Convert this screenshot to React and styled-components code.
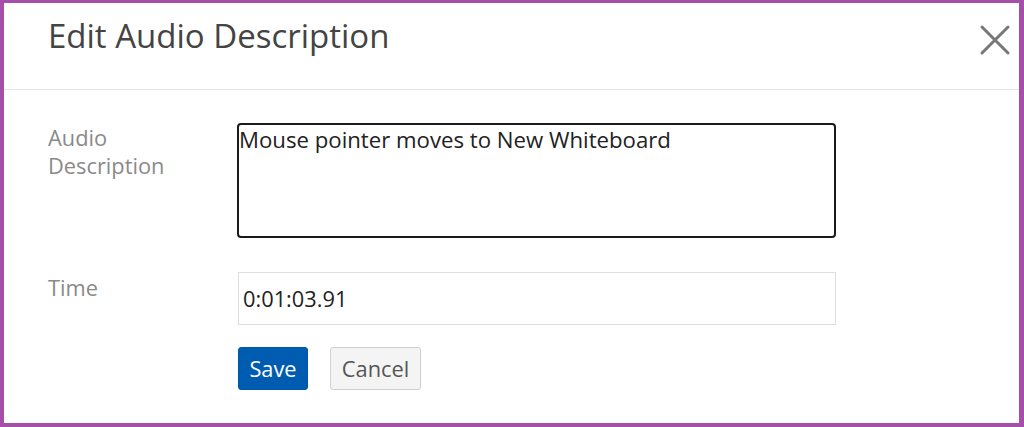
import React from "react";
import styled, { createGlobalStyle } from "styled-components";

const Global = createGlobalStyle`
  html, body { margin: 0; padding: 0; background: #fff; }
  * { box-sizing: border-box; }
`;

const Frame = styled.div`
  width: 1024px;
  height: 427px;
  border-style: solid;
  border-color: #a54fab;
  border-width: 3px 5px 4px 4px;
  background: #fff;
  font-family: "Open Sans", "Noto Sans", sans-serif;
  display: flex;
  flex-direction: column;
`;

const Header = styled.div`
  height: 87px;
  display: flex;
  align-items: flex-start;
  justify-content: space-between;
  padding: 10px 8px 0 44px;
  border-bottom: 1px solid #e3e3e3;
`;

const Title = styled.h1`
  margin: 0;
  font-size: 33px;
  line-height: 45px;
  font-weight: 400;
  color: #444;
`;

const CloseButton = styled.button`
  border: none;
  background: none;
  padding: 0;
  margin-top: 11px;
  width: 32px;
  height: 32px;
  display: flex;
  cursor: pointer;
`;

const Body = styled.div`
  padding: 33px 0 0 44px;
  display: grid;
  grid-template-columns: 189px 599px;
`;

const Label = styled.div`
  font-size: 21.8px;
  line-height: 28px;
  color: #8a8a8a;
  padding-top: ${(p) => p.$top || 0}px;
`;

const TextArea = styled.div`
  height: 115px;
  border: 2px solid #1a1a1a;
  border-radius: 4px;
  padding: 1px 0 0 0;
  font-size: 22.2px;
  line-height: 28px;
  color: #222;
`;

const Input = styled.div`
  margin: 34px 0 0 1px;
  height: 53px;
  border: 1px solid #dedede;
  display: flex;
  align-items: center;
  padding: 0 4px;
  font-size: 21.8px;
  color: #222;
`;

const Buttons = styled.div`
  grid-column: 2;
  display: flex;
  gap: 22px;
  margin: 22px 0 0 1px;
`;

const Button = styled.button`
  height: 43px;
  width: ${(p) => (p.$primary ? 70 : 91)}px;
  padding: 0;
  font-family: inherit;
  font-size: 21.8px;
  border-radius: 3px;
  border: 1px solid ${(p) => (p.$primary ? "#0058a9" : "#cfcfcf")};
  background: ${(p) => (p.$primary ? "#005cb0" : "#f4f4f4")};
  color: ${(p) => (p.$primary ? "#fff" : "#555")};
  cursor: pointer;
`;

export default function App() {
  return (
    <>
      <Global />
      <Frame>
        <Header>
          <Title>Edit Audio Description</Title>
          <CloseButton aria-label="Close">
            <svg width="32" height="32" viewBox="0 0 32 32">
              <path d="M3 3 L29 29 M29 3 L3 29" stroke="#777" strokeWidth="3" strokeLinecap="round" />
            </svg>
          </CloseButton>
        </Header>
        <Body>
          <Label $top={1}>Audio<br />Description</Label>
          <TextArea>Mouse pointer moves to New Whiteboard</TextArea>
          <Label $top={36}>Time</Label>
          <Input>0:01:03.91</Input>
          <Buttons>
            <Button $primary>Save</Button>
            <Button>Cancel</Button>
          </Buttons>
        </Body>
      </Frame>
    </>
  );
}
